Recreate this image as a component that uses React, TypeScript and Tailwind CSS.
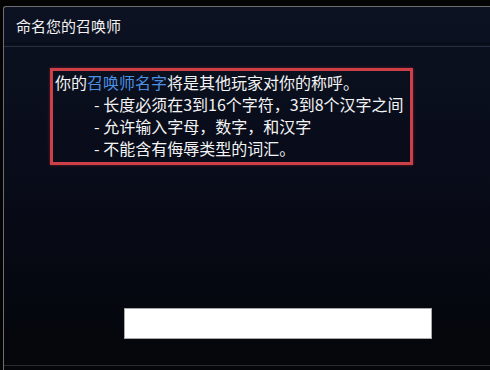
export default function App() {
  const font = { fontFamily: '"Noto Sans CJK SC", "Noto Sans", sans-serif' };
  return (
    <div className="w-[490px] h-[370px] bg-[#040404] pt-[6px] pl-[3px] overflow-hidden" style={font}>
      <div className="h-[364px] border-l border-t border-[#6e6e70] rounded-tl-[3px] bg-gradient-to-b from-[#0c1222] via-[#080b18] to-[#04060a] flex flex-col">
        <div className="h-[37px] flex items-center pl-[12px] border-b border-[#070a12]">
          <span className="text-[15px] leading-none text-[#f2f2f2]">命名您的召唤师</span>
        </div>
        <div className="h-[2px]" />
        <div className="h-[1px] bg-[#2a2f3b]" />
        <div className="ml-[46px] mt-[21px] w-[363px] h-[97px] border-[3px] border-[#cf3f48] pl-[2px] text-[16px] leading-[22px] text-[#f4f4f4] shadow-[0_0_3px_rgba(200,50,60,0.5)]">
          <div className="whitespace-nowrap">
            你的<span className="text-[#4d8fe0]">召唤师名字</span>将是其他玩家对你的称呼。
          </div>
          <div className="whitespace-nowrap pl-[39px]">- 长度必须在3到16个字符，3到8个汉字之间</div>
          <div className="whitespace-nowrap pl-[39px]">- 允许输入字母，数字，和汉字</div>
          <div className="whitespace-nowrap pl-[39px]">- 不能含有侮辱类型的词汇。</div>
        </div>
        <div className="ml-[120px] mt-[143px] w-[308px] h-[31px] bg-white border border-[#a8a8a8]" />
        <div className="mt-[26px] h-[1px] bg-[#2b2b2e]" />
      </div>
    </div>
  );
}
